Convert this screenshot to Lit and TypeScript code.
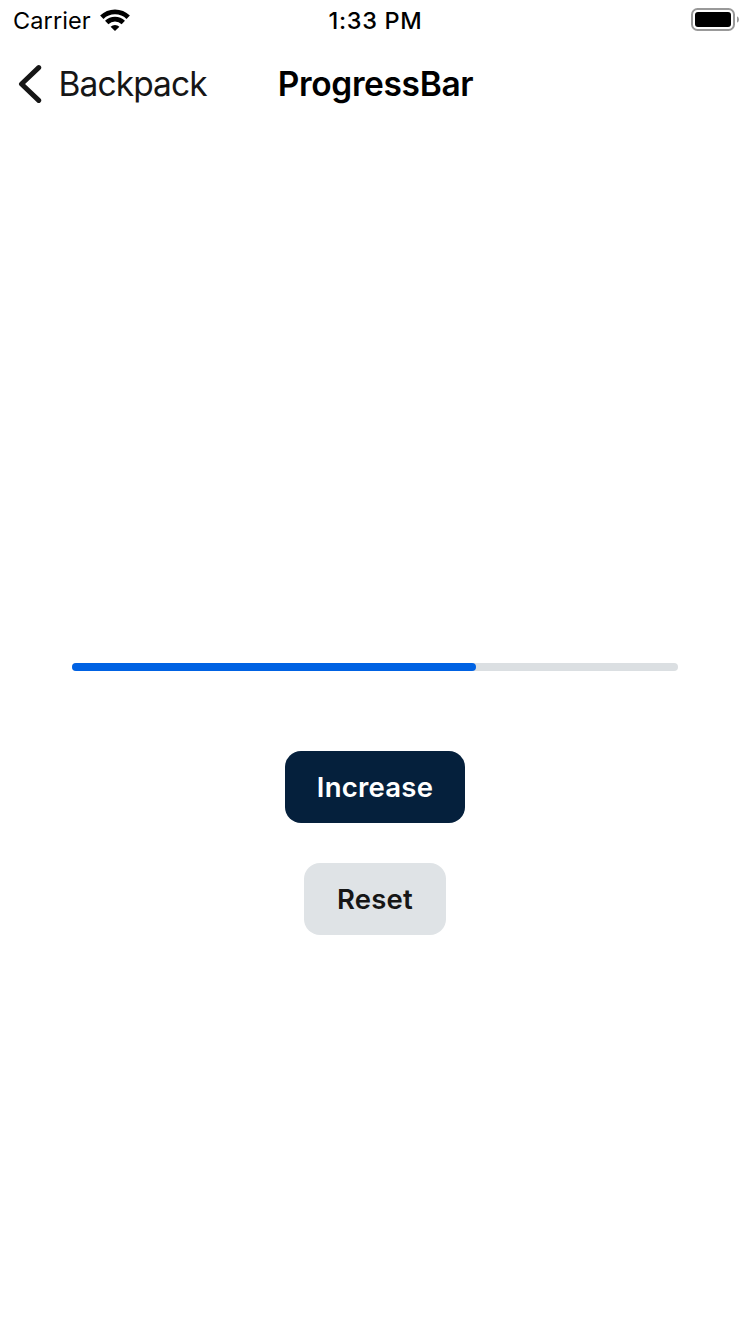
import { LitElement, html, css } from "lit";
import { customElement, state } from "lit/decorators.js";

@customElement("status-bar")
class StatusBar extends LitElement {
  static styles = css`
    :host {
      display: grid;
      grid-template-columns: 1fr auto 1fr;
      align-items: center;
      height: 40px;
      padding: 0 11px 0 13px;
      box-sizing: border-box;
      font-size: 23.5px;
      line-height: 38px;
      color: #000;
    }
    span {
      padding-top: 2px;
    }
    .carrier {
      display: flex;
      align-items: center;
      gap: 8px;
      letter-spacing: 0.1px;
    }
    .time {
      font-weight: 500;
      letter-spacing: 0.7px;
      margin-left: -1px;
    }
    .battery {
      justify-self: end;
    }
    svg {
      display: block;
    }
  `;

  render() {
    return html`
      <div class="carrier">
        <span>Carrier</span>
        <svg width="32" height="24" viewBox="0 0 32 24">
          <g fill="none" stroke="#000" stroke-width="4.8">
            <path d="M2.8 9.2a19 19 0 0 1 26.4 0" />
            <path d="M7.7 14.4a12 12 0 0 1 16.6 0" />
          </g>
          <path d="M11.6 18.8a6.4 6.4 0 0 1 8.8 0L16 23z" />
        </svg>
      </div>
      <span class="time">1:33 PM</span>
      <svg class="battery" width="48" height="24" viewBox="0 0 48 24">
        <rect x="1" y="1" width="42" height="21" rx="5.5" fill="none" stroke="#999" stroke-width="2" />
        <rect x="4" y="4" width="36" height="15" rx="3" />
        <path d="M46 8.2q2 1 2 3.3t-2 3.3z" fill="#999" />
      </svg>
    `;
  }
}

@customElement("nav-bar")
class NavBar extends LitElement {
  static styles = css`
    :host {
      display: grid;
      grid-template-columns: 1fr auto 1fr;
      align-items: center;
      height: 88px;
      padding: 0 18px;
      box-sizing: border-box;
      font-size: 33.5px;
      line-height: 40px;
    }
    .back {
      display: flex;
      align-items: center;
      gap: 16.5px;
      color: #161616;
      letter-spacing: -0.9px;
    }
    .title {
      font-weight: 600;
      color: #000;
      letter-spacing: -0.35px;
      margin-left: 1px;
    }
    svg {
      display: block;
    }
  `;

  render() {
    return html`
      <div class="back">
        <svg width="24" height="40" viewBox="0 0 24 40">
          <path d="M20.7 3.6L3.5 20l17.2 16.4" fill="none" stroke="#161616" stroke-width="5" stroke-linecap="round" stroke-linejoin="round" />
        </svg>
        <span>Backpack</span>
      </div>
      <span class="title">ProgressBar</span>
    `;
  }
}

@customElement("app-root")
class AppRoot extends LitElement {
  static styles = css`
    :host {
      display: flex;
      flex-direction: column;
      height: 1334px;
      background: #fff;
      font-family: Inter, "Liberation Sans", sans-serif;
    }
    .content {
      display: flex;
      flex-direction: column;
      align-items: center;
      padding: 535px 72px 0;
    }
    .track {
      align-self: stretch;
      height: 8px;
      border-radius: 4px;
      background: #dbdfe2;
      margin-bottom: 80px;
    }
    .fill {
      height: 8px;
      border-radius: 4px;
      background: #0062e3;
    }
    button {
      height: 72px;
      padding: 0;
      border: 0;
      border-radius: 16px;
      font: 600 27.5px/72px Inter, "Liberation Sans", sans-serif;
      letter-spacing: 0.25px;
    }
    .increase {
      width: 180px;
      margin-bottom: 40px;
      background: #05203c;
      color: #fff;
    }
    .reset {
      width: 142px;
      background: #dfe3e6;
      color: #161616;
    }
  `;

  @state() private progress = 2 / 3;

  render() {
    return html`
      <status-bar></status-bar>
      <nav-bar></nav-bar>
      <div class="content">
        <div class="track"><div class="fill" style="width:${this.progress * 100}%"></div></div>
        <button class="increase" @click=${() => (this.progress = Math.min(1, this.progress + 1 / 6))}>Increase</button>
        <button class="reset" @click=${() => (this.progress = 0)}>Reset</button>
      </div>
    `;
  }
}
